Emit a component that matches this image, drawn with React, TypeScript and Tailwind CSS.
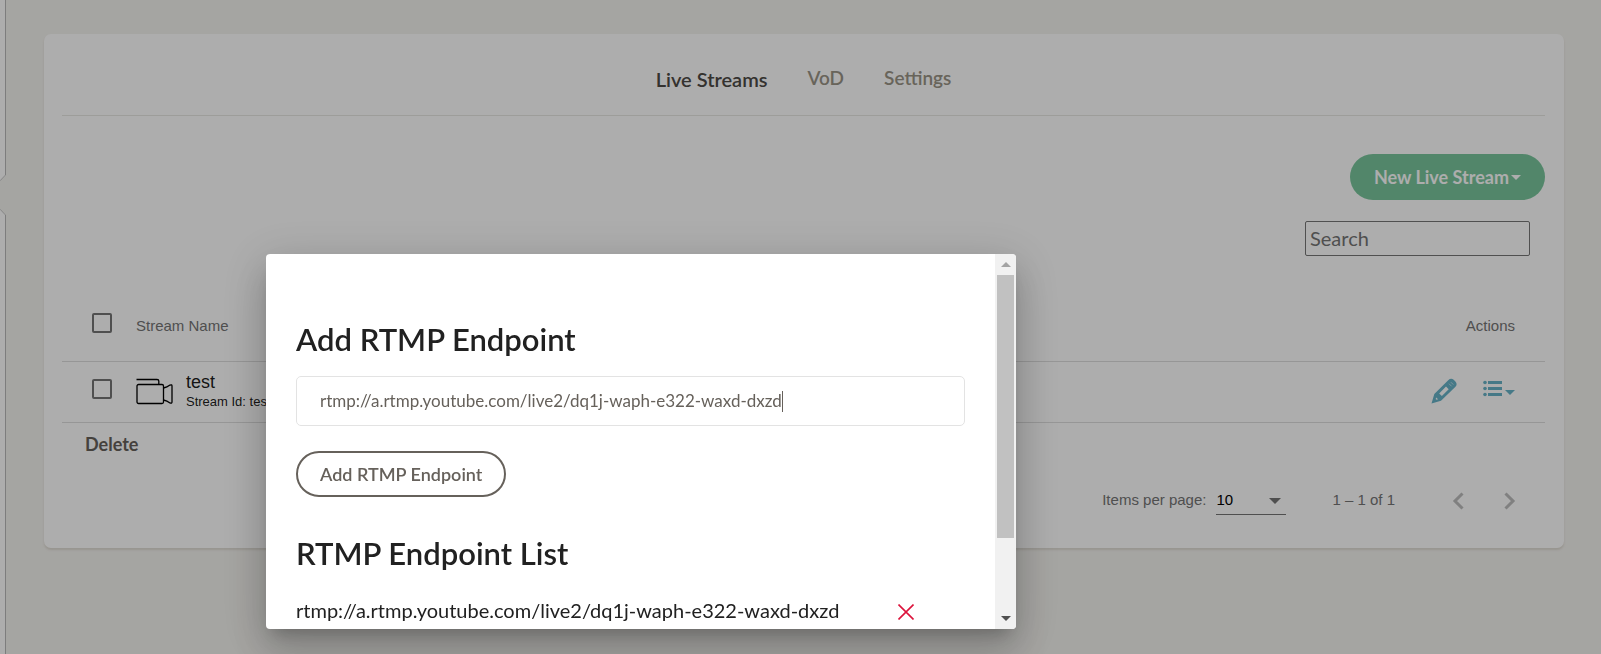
import React, { useState } from 'react';

interface Stream {
  id: string;
  name: string;
}

const TABS = ['Live Streams', 'VoD', 'Settings'];

const STREAMS: Stream[] = [{ id: 'test', name: 'test' }];

const ENDPOINT = 'rtmp://a.rtmp.youtube.com/live2/dq1j-waph-e322-waxd-dxzd';

const CHECKBOX =
  'block w-5 h-5 appearance-none rounded-[2px] border-2 border-[#757575] checked:bg-[#757575]';

function CameraIcon() {
  return (
    <svg width="37" height="27" viewBox="0 0 37 27" fill="none" stroke="#000" strokeWidth="1.3">
      <path d="M.5 1.500h20.500q1.800 0 1.800 1.500v3" />
      <rect x="1" y="6.500" width="26.500" height="19" rx="1.500" />
      <path d="M27.500 10c3-.6 4.500-1.400 6.500-2.900q2-.8 2 .9v16q0 1.700-2 .9c-2-1.500-3.500-2.300-6.500-2.900" />
    </svg>
  );
}

function PencilIcon() {
  return (
    <svg width="26" height="26" viewBox="0 0 26 26" fill="none">
      <path
        fill="#68b3c8"
        fillRule="evenodd"
        d="M.5 25.500l2.800-9.500L17.200 2.200Q20-.4 22.700 1.800L24.600 3.700Q26.800 6.400 24.200 9.100L10 22.800zM5.200 19.400l-.5 1.600.8.8 1.600-.5zM8.200 15.400l2.700 2.700 6.800-6.800-2.700-2.700z"
      />
      <path stroke="#fff" strokeOpacity=".8" strokeWidth=".7" d="M18 5.700l2.600 2.600M19.900 4.200l2.400 2.400" />
    </svg>
  );
}

function ListIcon() {
  return (
    <svg width="19" height="17" viewBox="0 0 19 17" fill="#68b3c8">
      <circle cx="2" cy="2.500" r="1.800" />
      <circle cx="2" cy="8.500" r="1.800" />
      <circle cx="2" cy="14.500" r="1.800" />
      <path d="M5 1h14v3H5zM5 7h14v3H5zM5 13h14v3H5z" />
    </svg>
  );
}

function Caret({ className }: { className?: string }) {
  return (
    <svg className={className} width="10" height="5" viewBox="0 0 10 5" fill="currentColor">
      <path d="M0 0h10L5 5z" />
    </svg>
  );
}

function SidebarEdge() {
  return (
    <div className="flex flex-col shrink-0 w-[6px]">
      <div className="h-[175px] bg-white border-r border-[#b8b8b8]" />
      <svg width="6" height="40" viewBox="0 0 6 40">
        <path d="M0 0h6L0 6zM0 40h6L0 34z" fill="#fff" />
        <path d="M5.500 0L0 5.800M5.500 40L0 34.200" stroke="#c4c4c4" fill="none" />
      </svg>
      <div className="grow bg-white border-r border-[#b8b8b8]" />
    </div>
  );
}

function StreamTable() {
  return (
    <table className="w-full mt-[35px] text-left">
      <thead>
        <tr className="h-[70px] border-b border-[#dedede] text-[15px] text-[#757575]">
          <th className="w-[74px] pl-[30px] pb-1.5">
            <input type="checkbox" aria-label="Select all streams" className={CHECKBOX} />
          </th>
          <th className="font-normal">Stream Name</th>
          <th className="pr-[30px] text-right font-normal">Actions</th>
        </tr>
      </thead>
      <tbody>
        {STREAMS.map((stream) => (
          <tr key={stream.id} className="h-[61px] border-b border-[#dedede] text-black/90">
            <td className="pl-[30px] pb-1.5">
              <input type="checkbox" aria-label={`Select ${stream.name}`} className={CHECKBOX} />
            </td>
            <td>
              <div className="flex items-center gap-[13px]">
                <CameraIcon />
                <div>
                  <p className="text-[18px] leading-5">{stream.name}</p>
                  <p className="text-[13px] leading-5">Stream Id: {stream.id}</p>
                </div>
              </div>
            </td>
            <td className="pr-[30px] pb-0.5">
              <div className="flex items-center justify-end gap-[26px]">
                <button type="button" aria-label="Edit stream">
                  <PencilIcon />
                </button>
                <button
                  type="button"
                  aria-label="More actions"
                  className="flex items-center gap-[3px] pb-1 text-[#68b3c8]"
                >
                  <ListIcon />
                  <Caret className="mt-2" />
                </button>
              </div>
            </td>
          </tr>
        ))}
      </tbody>
    </table>
  );
}

function Paginator() {
  return (
    <div className="flex items-center justify-end mt-6 pr-[17px] text-[15px] text-[#757575]">
      <label htmlFor="page-size" className="mr-[10px]">
        Items per page:
      </label>
      <div className="relative">
        <select
          id="page-size"
          className="block w-[70px] h-[29px] appearance-none border-b border-[#757575] text-black"
        >
          <option>10</option>
        </select>
        <svg
          className="absolute right-[5px] top-[12px]"
          width="12"
          height="6"
          viewBox="0 0 12 6"
          fill="#757575"
        >
          <path d="M0 0h12L6 6z" />
        </svg>
      </div>
      <span className="ml-[46px] mr-[45px]">1 – 1 of 1</span>
      <button type="button" aria-label="Previous page" className="p-2">
        <svg width="22" height="22" viewBox="0 0 22 22" fill="none" stroke="#bdbdbd" strokeWidth="3">
          <path d="M14.500 3.500L7 11l7.500 7.500" />
        </svg>
      </button>
      <button type="button" aria-label="Next page" className="p-2 ml-3">
        <svg width="22" height="22" viewBox="0 0 22 22" fill="none" stroke="#bdbdbd" strokeWidth="3">
          <path d="M7.500 3.500L15 11l-7.500 7.500" />
        </svg>
      </button>
    </div>
  );
}

function EndpointDialog() {
  const [url, setUrl] = useState(ENDPOINT);

  return (
    <div
      role="dialog"
      aria-label="Add RTMP Endpoint"
      className="flex w-[750px] h-[375px] overflow-hidden rounded-[4px] bg-white text-[#212121] shadow-[0_11px_15px_-7px_rgba(0,0,0,0.2),0_24px_38px_3px_rgba(0,0,0,0.14),0_9px_46px_8px_rgba(0,0,0,0.12)]"
    >
      <div className="grow overflow-hidden px-[30px] pt-[65px]">
        <h2 className="text-[31px] leading-10 font-semibold">
          <label htmlFor="endpoint">Add RTMP Endpoint</label>
        </h2>
        <div className="flex items-center h-[50px] mt-[17px] px-[23px] rounded-[5px] border border-[#e3e3e3]">
          <input
            id="endpoint"
            type="text"
            value={url}
            onChange={(e) => setUrl(e.target.value)}
            className="max-w-full field-sizing-content text-[17px] text-[#66615b] caret-transparent outline-none"
          />
          <span className="w-px h-[21px] bg-[#66615b]" />
        </div>
        <button
          type="button"
          className="h-[46px] mt-[25px] px-[22px] rounded-full border-2 border-[#66615b] text-[18px] font-semibold text-[#66615b]"
        >
          Add RTMP Endpoint
        </button>
        <h2 className="mt-9 text-[31px] leading-10 font-semibold">RTMP Endpoint List</h2>
        <ul className="mt-[23px] pb-[60px]">
          <li className="flex items-center gap-[59px] text-[20px] leading-7">
            <span>{ENDPOINT}</span>
            <button type="button" aria-label="Remove endpoint" className="pt-1">
              <svg width="16" height="16" viewBox="0 0 16 16" fill="none" stroke="#dc143c" strokeWidth="1.600">
                <path d="M.5.5l15 15M15.500.5l-15 15" />
              </svg>
            </button>
          </li>
        </ul>
      </div>
      <div className="flex flex-col justify-between shrink-0 w-[21px] bg-[#f1f1f1]">
        <div className="flex flex-col items-center">
          <Caret className="my-2 rotate-180 text-[#a3a3a3]" />
          <div className="w-[17px] h-[263px] bg-[#c1c1c1]" />
        </div>
        <Caret className="self-center mb-2 text-[#505050]" />
      </div>
    </div>
  );
}

export default function App() {
  return (
    <div className="flex min-h-screen bg-[#f4f3ef] font-['Liberation_Sans',sans-serif]">
      <SidebarEdge />
      <main className="grow pl-[38px] pr-[37px] pt-[34px]">
        <section className="pl-[18px] pr-[19px] pb-7 rounded-[7px] bg-white shadow-[0_2px_2px_rgba(204,197,185,0.5)]">
          <nav className="flex items-center justify-center gap-10 h-[82px] pt-2 border-b border-[#e8e7e3] font-['Lato',sans-serif] font-semibold">
            {TABS.map((tab, i) => (
              <a
                key={tab}
                href="#"
                className={i === 0 ? 'text-[20px] text-[#4d4a46]' : 'text-[19px] text-[#9a9486]'}
              >
                {tab}
              </a>
            ))}
          </nav>
          <div className="flex flex-col items-end pt-[38px] font-['Lato',sans-serif]">
            <button
              type="button"
              className="flex items-center gap-0.5 h-[46px] px-6 rounded-full bg-[#7ac69c] text-[18px] font-bold text-white"
            >
              New Live Stream
              <Caret />
            </button>
            <input
              type="text"
              aria-label="Search"
              placeholder="Search"
              className="w-[225px] h-[35px] mt-[21px] mr-[15px] px-1 pb-0.5 rounded-[2px] border border-[#767676] text-[20px] placeholder:text-[#757575]"
            />
          </div>
          <StreamTable />
          <button type="button" className="block mt-2 ml-[23px] font-['Lato',sans-serif] text-[18px] font-bold text-[#66615b]">
            Delete
          </button>
          <Paginator />
        </section>
      </main>
      <div className="fixed inset-0 flex items-end justify-center pb-[25px] pr-[319px] bg-black/32 font-['Lato',sans-serif]">
        <EndpointDialog />
      </div>
    </div>
  );
}
